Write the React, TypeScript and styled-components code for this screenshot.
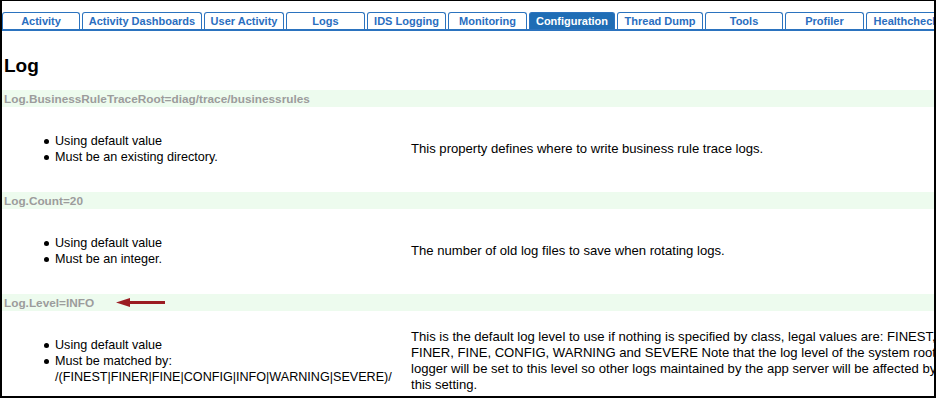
import React from "react";
import styled, { createGlobalStyle } from "styled-components";

const GlobalStyle = createGlobalStyle`
  html, body {
    margin: 0;
    padding: 0;
    background: #fff;
  }
  body {
    font-family: "Liberation Sans", Arial, sans-serif;
  }
`;

const Frame = styled.div`
  box-sizing: border-box;
  width: 936px;
  height: 398px;
  border: 2px solid #000;
  border-top-width: 1px;
  overflow: hidden;
  background: #fff;
`;

const TabStrip = styled.div`
  display: flex;
  gap: 2px;
  margin-top: 11px;
  border-bottom: 2px solid #2b73bf;
  white-space: nowrap;
`;

const Tab = styled.div<{ $active?: boolean; $width: number }>`
  box-sizing: border-box;
  flex: 0 0 auto;
  width: ${(p) => p.$width}px;
  height: 17px;
  padding: 0 4px;
  border: 1px solid #2b73bf;
  border-bottom: none;
  border-radius: 3px 3px 0 0;
  background: ${(p) => (p.$active ? "#1f6db5" : "#fff")};
  color: ${(p) => (p.$active ? "#fff" : "#2a6ebf")};
  font-size: 11px;
  font-weight: bold;
  line-height: 17px;
  text-align: center;
`;

const Heading = styled.h2`
  margin: 23px 0 13px 2px;
  font-size: 19px;
  line-height: 23px;
  font-weight: bold;
  color: #000;
`;

const Entry = styled.section`
  font-size: 12.6px;
  line-height: 16px;
`;

const LabelBar = styled.div`
  display: flex;
  align-items: center;
  height: 17px;
  padding-left: 2px;
  background: #edfbee;
  color: #9c9c9c;
  font-weight: bold;
  font-size: 11.8px;
  white-space: nowrap;
`;

const ValueRow = styled.div`
  display: grid;
  grid-template-columns: 409px 526px;
  align-items: center;
  padding: 10px 0 11px;
`;

const RuleList = styled.ul`
  list-style: none;
  margin: 16px 0;
  padding: 0 0 0 42px;
`;

const Rule = styled.li`
  display: flex;
  align-items: flex-start;
  color: #000;

  &::before {
    content: "";
    flex: 0 0 auto;
    width: 5px;
    height: 5px;
    margin: 6px 6px 0 0;
    border-radius: 50%;
    background: #000;
  }
`;

const Desc = styled.div`
  color: #000;
  font-size: 13.1px;
`;

const Arrow = styled.svg`
  flex: 0 0 auto;
  margin-left: 22px;
`;

const tabs: [string, number][] = [
  ["Activity", 78],
  ["Activity Dashboards", 120],
  ["User Activity", 80],
  ["Logs", 79],
  ["IDS Logging", 79],
  ["Monitoring", 79],
  ["Configuration", 86],
  ["Thread Dump", 86],
  ["Tools", 78],
  ["Profiler", 79],
  ["Healthcheck", 80],
];

interface Property {
  label: string;
  rules: string[];
  description: string;
  marked?: boolean;
}

const properties: Property[] = [
  {
    label: "Log.BusinessRuleTraceRoot=diag/trace/businessrules",
    rules: ["Using default value", "Must be an existing directory."],
    description: "This property defines where to write business rule trace logs.",
  },
  {
    label: "Log.Count=20",
    rules: ["Using default value", "Must be an integer."],
    description: "The number of old log files to save when rotating logs.",
  },
  {
    label: "Log.Level=INFO",
    rules: [
      "Using default value",
      "Must be matched by: /(FINEST|FINER|FINE|CONFIG|INFO|WARNING|SEVERE)/",
    ],
    description:
      "This is the default log level to use if nothing is specified by class, legal values are: FINEST, FINER, FINE, CONFIG, WARNING and SEVERE Note that the log level of the system root logger will be set to this level so other logs maintained by the app server will be affected by this setting.",
    marked: true,
  },
];

const RedArrow = () => (
  <Arrow width="50" height="9" viewBox="0 0 50 9">
    <polygon points="0,4.5 14,0 14,3 49,3 49,6 14,6 14,9" fill="#9b1c22" />
  </Arrow>
);

const App = () => {
  return (
    <Frame>
      <GlobalStyle />
      <TabStrip>
        {tabs.map(([t, w]) => (
          <Tab key={t} $width={w} $active={t === "Configuration"}>
            {t}
          </Tab>
        ))}
      </TabStrip>
      <Heading>Log</Heading>
      {properties.map((p) => (
        <Entry key={p.label}>
          <LabelBar>
            {p.label}
            {p.marked && <RedArrow />}
          </LabelBar>
          <ValueRow>
            <RuleList>
              {p.rules.map((r) => (
                <Rule key={r}>
                  <span>{r}</span>
                </Rule>
              ))}
            </RuleList>
            <Desc>{p.description}</Desc>
          </ValueRow>
        </Entry>
      ))}
    </Frame>
  );
};

export default App;
